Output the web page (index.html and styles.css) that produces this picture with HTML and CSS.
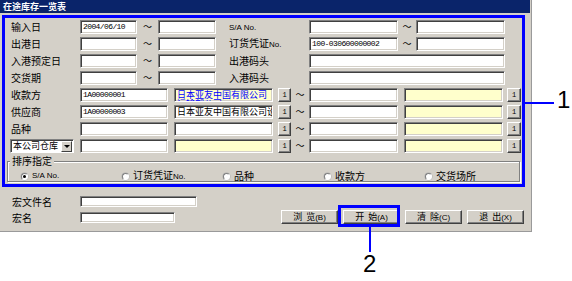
FILE: index.html
```html
<!DOCTYPE html>
<html lang="zh-CN">
<head>
    <meta charset="UTF-8">
    <title>在途库存一览表</title>
    <link rel="stylesheet" href="styles.css">
</head>
<body>
    <div class="window">
        <div class="titlebar">在途库存一览表</div>

        <div class="panel">
            <!-- 日期 / 单号条件 -->
            <div class="grid-top">
                <div class="lbl">输入日</div>
                <div class="field">2004/06/10</div>
                <div class="tilde">～</div>
                <div class="field"></div>
                <div class="lbl lbl-r"><span class="en">S/A No.</span></div>
                <div class="field"></div>
                <div class="tilde">～</div>
                <div class="field"></div>

                <div class="lbl">出港日</div>
                <div class="field"></div>
                <div class="tilde">～</div>
                <div class="field"></div>
                <div class="lbl lbl-r">订货凭证<span class="en">No.</span></div>
                <div class="field">100-030600000002</div>
                <div class="tilde">～</div>
                <div class="field"></div>

                <div class="lbl">入港预定日</div>
                <div class="field"></div>
                <div class="tilde">～</div>
                <div class="field"></div>
                <div class="lbl lbl-r">出港码头</div>
                <div class="field span3"></div>

                <div class="lbl">交货期</div>
                <div class="field"></div>
                <div class="tilde">～</div>
                <div class="field"></div>
                <div class="lbl lbl-r">入港码头</div>
                <div class="field span3"></div>
            </div>

            <!-- 代码范围条件 -->
            <div class="grid-bottom">
                <div class="lbl">收款方</div>
                <div class="field w88">1A00000001</div>
                <div class="field w99 yellow multi">日本亚友中国有限公司运输部公司</div>
                <div class="btn1">1</div>
                <div class="tilde">～</div>
                <div class="field w89"></div>
                <div class="field w99 yellow"></div>
                <div class="btn1">1</div>

                <div class="lbl">供应商</div>
                <div class="field w88">1A00000003</div>
                <div class="field w99"><span class="cn">日本亚友中国有限公司设</span></div>
                <div class="btn1">1</div>
                <div class="tilde">～</div>
                <div class="field w89"></div>
                <div class="field w99 yellow"></div>
                <div class="btn1">1</div>

                <div class="lbl">品种</div>
                <div class="field w88"></div>
                <div class="field w99"></div>
                <div class="btn1">1</div>
                <div class="tilde">～</div>
                <div class="field w89"></div>
                <div class="field w99 yellow"></div>
                <div class="btn1">1</div>

                <div class="select">
                    <span>本公司仓库</span>
                    <span class="drop"><i class="arrow"></i></span>
                </div>
                <div class="field w88"></div>
                <div class="field w99 yellow"></div>
                <div class="btn1">1</div>
                <div class="tilde">～</div>
                <div class="field w89"></div>
                <div class="field w99 yellow"></div>
                <div class="btn1">1</div>
            </div>

            <fieldset class="sort">
                <legend>排序指定</legend>
                <div class="radios">
                    <div class="opt"><span class="radio checked"></span><span class="en">S/A No.</span></div>
                    <div class="opt"><span class="radio"></span><span>订货凭证<span class="en">No.</span></span></div>
                    <div class="opt"><span class="radio"></span><span>品种</span></div>
                    <div class="opt"><span class="radio"></span><span>收款方</span></div>
                    <div class="opt"><span class="radio"></span><span>交货场所</span></div>
                </div>
            </fieldset>
        </div>

        <div class="bottom">
            <div class="macro">
                <div class="lbl">宏文件名</div>
                <div class="field sm w117"></div>
                <div class="lbl">宏名</div>
                <div class="field sm w95"></div>
            </div>
            <div class="actions">
                <div class="btn">浏&nbsp;&nbsp;览<span class="en">(B)</span></div>
                <div class="btn">开&nbsp;&nbsp;始<span class="en">(A)</span></div>
                <div class="btn">清&nbsp;&nbsp;除<span class="en">(C)</span></div>
                <div class="btn">退&nbsp;&nbsp;出<span class="en">(X)</span></div>
            </div>
        </div>
    </div>

    <!-- 标注 -->
    <div class="mark-line mark-line-1"></div>
    <div class="mark-num mark-num-1">1</div>
    <div class="mark-box"></div>
    <div class="mark-line mark-line-2"></div>
    <div class="mark-num mark-num-2">2</div>
</body>
</html>
```

FILE: styles.css
```css
* {
    box-sizing: border-box;
}
body {
    margin: 0;
    background: #fff;
    font-family: "Noto Sans CJK SC", sans-serif;
    font-size: 10px;
    color: #000;
    position: relative;
    height: 281px;
    overflow: hidden;
}
.en {
    font-family: "Liberation Sans", sans-serif;
    font-size: 8px;
}
.window {
    width: 532px;
    height: 232px;
    background: #d4d0c8;
    border-right: 1px solid #9a9a9a;
    border-bottom: 1px solid #9a9a9a;
}
.titlebar {
    height: 13px;
    margin-right: 1px;
    padding-left: 3px;
    background: #0a246a;
    color: #fff;
    font-weight: bold;
    font-size: 9px;
    line-height: 13px;
}
.panel {
    width: 523px;
    margin: 2px 0 0 2px;
    border: 3px solid #0000ff;
    padding: 2px 0 2px 5px;
}
.grid-top, .grid-bottom {
    display: grid;
    grid-auto-rows: 14px;
    row-gap: 3px;
    align-items: center;
}
.grid-top {
    grid-template-columns: 70px 57px 21px 58px 93px 89px 18px 89px;
}
.grid-bottom {
    margin-top: 3px;
    grid-template-columns: 70px 94px 104px 13px 18px 95px 103px 14px;
}
.lbl {
    padding-left: 1px;
    line-height: 14px;
    white-space: nowrap;
}
.lbl-r {
    padding-left: 13px;
}
.tilde {
    text-align: center;
    font-size: 9px;
    line-height: 14px;
}
.field {
    height: 14px;
    background: #fff;
    border: 1px solid;
    border-color: #808080 #fff #fff #808080;
    box-shadow: inset 1px 1px 0 #404040, inset -1px -1px 0 #d4d0c8;
    padding-left: 2px;
    font: 8px/12px "Liberation Mono", monospace;
    letter-spacing: -0.6px;
    overflow: hidden;
    white-space: nowrap;
}
.field .cn {
    font-family: "Noto Sans CJK SC", sans-serif;
    font-size: 9px;
    letter-spacing: 0;
}
.field.yellow {
    background: #ffffcc;
}
.field.multi {
    white-space: normal;
    word-break: break-all;
    font-family: "Noto Sans CJK SC", sans-serif;
    font-size: 9px;
    line-height: 9px;
    letter-spacing: 0;
    color: #0000ff;
    padding-top: 1px;
}
.span3 { grid-column: span 3; }
.w88 { width: 88px; }
.w89 { width: 89px; }
.w99 { width: 99px; }
.w95 { width: 95px; }
.w117 { width: 117px; }
.btn1 {
    height: 14px;
    background: #d4d0c8;
    border: 1px solid;
    border-color: #fff #404040 #404040 #fff;
    box-shadow: inset -1px -1px 0 #808080;
    font: 7px/12px "Liberation Mono", monospace;
    text-align: center;
}
.select {
    width: 64px;
    height: 14px;
    display: flex;
    align-items: center;
    justify-content: space-between;
    background: #fff;
    border: 1px solid;
    border-color: #808080 #fff #fff #808080;
    box-shadow: inset 1px 1px 0 #404040;
    padding: 0 1px 0 2px;
    font-size: 9px;
    line-height: 12px;
    white-space: nowrap;
}
.drop {
    width: 11px;
    height: 11px;
    background: #d4d0c8;
    border: 1px solid;
    border-color: #fff #404040 #404040 #fff;
    display: flex;
    align-items: center;
    justify-content: center;
}
.arrow {
    border-left: 3px solid transparent;
    border-right: 3px solid transparent;
    border-top: 3px solid #000;
}
.sort {
    margin: 3px 2px 0 -3px;
    padding: 4px 0 1px 2px;
    border: 1px solid #808080;
    box-shadow: 1px 1px 0 #fff, inset 1px 1px 0 #fff;
    min-width: 0;
}
.sort legend {
    padding: 0 2px;
    font-size: 10px;
    line-height: 10px;
    background: #d4d0c8;
}
.radios {
    display: grid;
    grid-template-columns: repeat(5, 101px);
    margin-left: 11px;
    height: 10px;
    line-height: 10px;
}
.opt {
    display: flex;
    align-items: center;
    gap: 4px;
    white-space: nowrap;
}
.radio {
    width: 7px;
    height: 7px;
    border-radius: 50%;
    background: #fff;
    border: 1px solid;
    border-color: #808080 #fff #fff #808080;
    box-shadow: 0 0 0 0.5px #b0b0b0;
    position: relative;
}
.radio.checked::after {
    content: "";
    position: absolute;
    left: 1px;
    top: 1px;
    width: 3px;
    height: 3px;
    border-radius: 50%;
    background: #000;
}
.bottom {
    display: flex;
    align-items: flex-end;
    padding: 9px 7px 0 11px;
}
.macro {
    display: grid;
    grid-template-columns: 69px auto;
    grid-auto-rows: 11px;
    row-gap: 5px;
    align-items: center;
}
.field.sm {
    height: 11px;
}
.actions {
    margin-left: auto;
    margin-bottom: -1px;
    display: flex;
    gap: 5px;
}
.btn {
    width: 57px;
    height: 14px;
    background: #d4d0c8;
    border: 1px solid;
    border-color: #fff #404040 #404040 #fff;
    box-shadow: inset -1px -1px 0 #808080;
    text-align: center;
    line-height: 12px;
    font-size: 9px;
    white-space: nowrap;
}
.mark-line {
    position: absolute;
    background: #0000ff;
}
.mark-line-1 {
    left: 525px;
    top: 102px;
    width: 29px;
    height: 2px;
}
.mark-line-2 {
    left: 369px;
    top: 227px;
    width: 2px;
    height: 25px;
}
.mark-box {
    position: absolute;
    left: 338px;
    top: 205px;
    width: 62px;
    height: 22px;
    border: 3px solid #0000ff;
}
.mark-num {
    position: absolute;
    font-family: "Liberation Sans", sans-serif;
    font-size: 24px;
    line-height: 24px;
    color: #000;
}
.mark-num-1 {
    left: 557px;
    top: 88px;
}
.mark-num-2 {
    left: 363px;
    top: 252px;
}
```
